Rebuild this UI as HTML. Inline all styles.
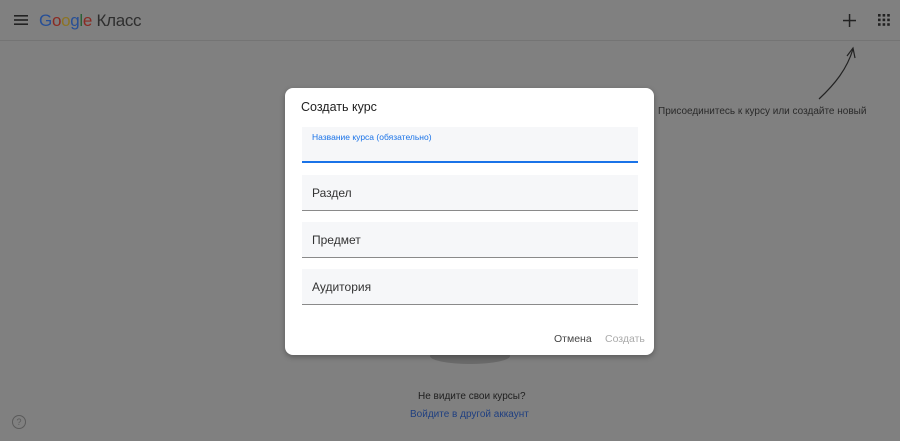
<!DOCTYPE html>
<html><head><meta charset="utf-8"><style>
*{margin:0;padding:0;box-sizing:border-box}
body{width:900px;height:441px;background:#808080;font-family:"Liberation Sans",Arial,sans-serif;position:relative;overflow:hidden}
.hdr{position:absolute;left:0;top:0;width:900px;height:41px;border-bottom:1px solid #747474}
.t{position:absolute;white-space:nowrap}
.dlg{position:absolute;left:285px;top:88px;width:369px;height:267px;background:#fff;border-radius:8px;box-shadow:0 2px 6px rgba(0,0,0,.3)}
.f{position:absolute;left:17px;width:336px;height:36px;background:#f6f7f9;border-bottom:1px solid #8a8a8a;font-size:12px;color:#333;padding:11px 10px}
</style></head><body>
<div class="hdr"></div>
<svg class="t" style="left:14px;top:14px" width="14" height="12"><rect y="1" width="14" height="1.6" fill="#222"/><rect y="5.2" width="14" height="1.6" fill="#222"/><rect y="9.4" width="14" height="1.6" fill="#222"/></svg>
<div class="t" style="left:39px;top:11px;font-size:17px;letter-spacing:-0.3px"><span style="color:#274f96">G</span><span style="color:#8a2a22">o</span><span style="color:#8c7424">o</span><span style="color:#274f96">g</span><span style="color:#2a5f36">l</span><span style="color:#8a2a22">e</span> <span style="color:#2e2e2e">Класс</span></div>
<svg class="t" style="left:843px;top:14px" width="13" height="13"><rect x="5.8" width="1.5" height="13" fill="#222"/><rect y="5.8" width="13" height="1.5" fill="#222"/></svg>
<svg class="t" style="left:878px;top:14px" width="12" height="12" fill="#222"><rect x="0" y="0" width="2.6" height="2.6"/><rect x="4.6" y="0" width="2.6" height="2.6"/><rect x="9.2" y="0" width="2.6" height="2.6"/><rect x="0" y="4.6" width="2.6" height="2.6"/><rect x="4.6" y="4.6" width="2.6" height="2.6"/><rect x="9.2" y="4.6" width="2.6" height="2.6"/><rect x="0" y="9.2" width="2.6" height="2.6"/><rect x="4.6" y="9.2" width="2.6" height="2.6"/><rect x="9.2" y="9.2" width="2.6" height="2.6"/></svg>
<svg class="t" style="left:815px;top:44px" width="45" height="58"><path d="M4 55 C20 40 32 25 38 5" stroke="#222" stroke-width="1.2" fill="none"/><path d="M32 12 L38 4 L40 14" stroke="#222" stroke-width="1.2" fill="none"/></svg>
<div class="t" style="left:658px;top:106px;font-size:10px;color:#2a2a2a">Присоединитесь к курсу или создайте новый</div>
<div class="t" style="left:430px;top:348px;width:80px;height:16px;border-radius:50%;background:#6a6a6a"></div>
<div class="dlg">
<div class="t" style="left:16px;top:12px;font-size:12.5px;color:#222">Создать курс</div>
<div class="f" style="top:39px;border-bottom:2px solid #1a73e8;padding:5px 10px;font-size:8.5px;color:#1a73e8">Название курса (обязательно)</div>
<div class="f" style="top:87px">Раздел</div>
<div class="f" style="top:134px">Предмет</div>
<div class="f" style="top:181px">Аудитория</div>
<div class="t" style="left:269px;top:245px;font-size:10.5px;color:#444">Отмена</div>
<div class="t" style="left:320px;top:245px;font-size:10.5px;color:#aaa">Создать</div>
</div>
<div class="t" style="left:418px;top:391px;font-size:10px;color:#1e1e1e">Не видите свои курсы?</div>
<div class="t" style="left:410px;top:409px;font-size:10px;color:#1f3f80">Войдите в другой аккаунт</div>
<div class="t" style="left:12px;top:415px;width:14px;height:14px;border:1.3px solid #5a5a5a;border-radius:50%;font-size:9px;color:#5a5a5a;text-align:center;line-height:12px">?</div>
</body></html>
